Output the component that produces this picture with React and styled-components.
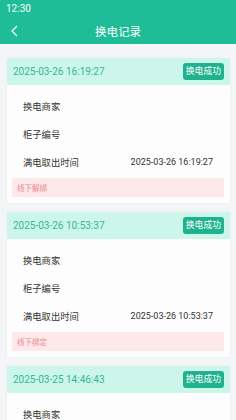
import styled, { createGlobalStyle } from 'styled-components'

const Global = createGlobalStyle`
    html, body {
        margin : 0;
        padding : 0;
        background : #f4f5f6;
        font-family : Roboto, "Noto Sans CJK SC", sans-serif;
    }
`

const Page = styled.div`
    width : 236px;
    height : 420px;
    overflow : hidden;
    background : #f4f5f6;
`

const Top = styled.div`
    background : #1ebc97;
    color : #ffffff;
`

const StatusBar = styled.div`
    height : 18px;
    padding-left : 6px;
    font-size : 10px;
    line-height : 18px;
`

const NavBar = styled.div`
    height : 26px;
    display : flex;
    align-items : center;
    justify-content : center;
    position : relative;
    font-size : 11.5px;
`

const Back = styled.svg`
    position : absolute;
    left : 10px;
    top : 7px;
`

const List = styled.div`
    padding : 14px 6px 0 7px;
    display : flex;
    flex-direction : column;
    gap : 9px;
`

const Card = styled.div`
    background : #fdfdfd;
    box-shadow : 0 0 3px rgba(0, 0, 0, 0.04);
    padding-bottom : 6px;
`

const CardHead = styled.div`
    height : 27px;
    background : #cdf6ea;
    display : flex;
    align-items : center;
    justify-content : space-between;
    padding : 0 6px 0 6px;
`

const Time = styled.span`
    font-size : 10px;
    color : #33b794;
`

const Badge = styled.span`
    background : #1fb28e;
    color : #ffffff;
    font-size : 8.8px;
    height : 17px;
    line-height : 17px;
    padding : 0 3px;
    border-radius : 3px;
`

const Rows = styled.div`
    padding : 7px 17px 0 16px;
`

const Row = styled.div`
    height : 28px;
    display : flex;
    align-items : center;
    justify-content : space-between;
    font-size : 9.3px;
    color : #333333;
`

const Value = styled.span`
    font-size : 9px;
    color : #333333;
`

const Note = styled.div`
    margin : 2px 6px 0 5px;
    height : 19px;
    background : #fde8ea;
    color : #e98891;
    font-size : 7.5px;
    display : flex;
    align-items : center;
    padding-left : 5px;
`

const records = [
    { time : '2025-03-26 16:19:27', note : '线下解绑' },
    { time : '2025-03-26 10:53:37', note : '线下绑定' },
    { time : '2025-03-25 14:46:43', note : '线下解绑' },
]

export default function App() {
    return (
        <Page>
            <Global />
            <Top>
                <StatusBar>12:30</StatusBar>
                <NavBar>
                    <Back width="9" height="12" viewBox="0 0 9 12">
                        <path d="M7 1 L2 6 L7 11" fill="none" stroke="#fff" strokeWidth="1.2" />
                    </Back>
                    换电记录
                </NavBar>
            </Top>

            <List>
                {records.map((r) => (
                    <Card key={r.time}>
                        <CardHead>
                            <Time>{r.time}</Time>
                            <Badge>换电成功</Badge>
                        </CardHead>
                        <Rows>
                            <Row>换电商家</Row>
                            <Row>柜子编号</Row>
                            <Row>
                                满电取出时间
                                <Value>{r.time}</Value>
                            </Row>
                        </Rows>
                        <Note>{r.note}</Note>
                    </Card>
                ))}
            </List>
        </Page>
    )
}
